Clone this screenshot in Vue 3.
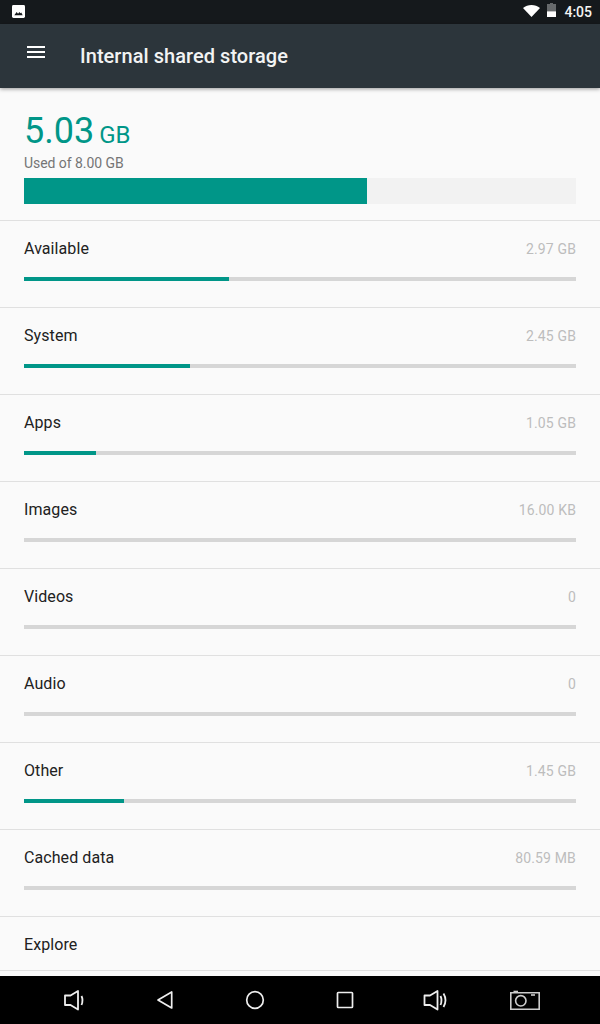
<template>
  <div class="screen">
    <div class="status-bar">
      <svg class="notif" width="13" height="13" viewBox="0 0 14 14">
        <rect x="0" y="0" width="14" height="14" rx="1.5" fill="#fff" />
        <path d="M2.5 11 L5 7.5 L6.5 9.5 L8 7.5 L9 9 L10 8 L11.5 11 Z" fill="#15191c" />
      </svg>
      <div class="status-right">
        <svg class="wifi" width="17" height="12" viewBox="0 0 18 14" preserveAspectRatio="none"><path d="M0 3.5 C5 -1 13 -1 18 3.5 L9 14 Z" fill="#fff" /></svg>
        <svg class="battery" width="9" height="14" viewBox="0 0 9 15" preserveAspectRatio="none">
          <path d="M3 0 H6 V1 H9 V15 H0 V1 H3 Z" fill="#fff" fill-opacity="0.35" />
          <rect x="0" y="9" width="9" height="6" fill="#fff" />
        </svg>
        <span class="clock">4:05</span>
      </div>
    </div>

    <header class="toolbar">
      <div class="menu-icon"><span></span><span></span><span></span></div>
      <h1>Internal shared storage</h1>
    </header>

    <main class="content">
      <section class="summary">
        <div class="total"><span class="big">5.03</span> <span class="unit">GB</span></div>
        <div class="used">Used of 8.00 GB</div>
        <div class="main-bar"><div class="main-fill"></div></div>
      </section>

      <div v-for="item in items" :key="item.name" class="row">
        <div class="row-head">
          <span class="name">{{ item.name }}</span>
          <span class="size">{{ item.size }}</span>
        </div>
        <div class="track"><div class="fill" :style="{ width: item.pct + '%' }"></div></div>
      </div>

      <div class="explore">Explore</div>
    </main>

    <nav class="nav-bar">
      <div class="nav-slot">
        <svg width="24" height="24" viewBox="0 0 24 24" fill="none" stroke="#eee" stroke-width="1.8">
          <path d="M2 7.5 H7.5 L15 3 V21.5 L7.5 17 H2 Z" stroke-linejoin="round" />
          <path d="M18.5 8 Q20.5 12.2 18.5 17" />
        </svg>
      </div>
      <div class="nav-slot">
        <svg width="24" height="24" viewBox="0 0 24 24" fill="none" stroke="#eee" stroke-width="1.7" stroke-linejoin="round">
          <path d="M18.7 4 V20 L5 12 Z" />
        </svg>
      </div>
      <div class="nav-slot">
        <svg width="24" height="24" viewBox="0 0 24 24" fill="none" stroke="#eee" stroke-width="1.7">
          <circle cx="12" cy="12" r="8.3" />
        </svg>
      </div>
      <div class="nav-slot">
        <svg width="24" height="24" viewBox="0 0 24 24" fill="none" stroke="#eee" stroke-width="1.7" stroke-linejoin="round">
          <rect x="4.5" y="4.5" width="15" height="15" rx="0.8" />
        </svg>
      </div>
      <div class="nav-slot">
        <svg width="24" height="24" viewBox="0 0 24 24" fill="none" stroke="#eee" stroke-width="1.8">
          <path d="M1.5 7.5 H7 L14.5 3 V21.5 L7 17 H1.5 Z" stroke-linejoin="round" />
          <path d="M17.5 8 Q19.5 12.2 17.5 17" />
          <path d="M20.5 5.5 Q24.5 12.2 20.5 19" />
        </svg>
      </div>
      <div class="nav-slot">
        <svg width="32" height="24" viewBox="0 0 32 24" fill="none" stroke="#ccc" stroke-width="1.6">
          <path d="M1.8 4.8 H30.2 V21.2 H1.8 Z" />
          <circle cx="11.8" cy="12.8" r="5.2" />
          <path d="M4.5 3.5 H9" />
          <path d="M22 7 H26" />
        </svg>
      </div>
    </nav>
  </div>
</template>

<script setup>
const items = [
  { name: 'Available', size: '2.97 GB', pct: 37.1 },
  { name: 'System', size: '2.45 GB', pct: 30.1 },
  { name: 'Apps', size: '1.05 GB', pct: 13 },
  { name: 'Images', size: '16.00 KB', pct: 0 },
  { name: 'Videos', size: '0', pct: 0 },
  { name: 'Audio', size: '0', pct: 0 },
  { name: 'Other', size: '1.45 GB', pct: 18.1 },
  { name: 'Cached data', size: '80.59 MB', pct: 0 }
]
</script>

<style scoped>
.screen { width: 600px; height: 1024px; display: flex; flex-direction: column; overflow: hidden; background: #fafafa; font-family: Roboto, "Liberation Sans", sans-serif; }

.status-bar { height: 24px; flex: none; display: flex; align-items: center; justify-content: space-between; padding: 0 8px 0 12px; background: #15191c; }
.notif { margin-bottom: 1px; }
.status-right { display: flex; align-items: center; gap: 8px; }
.wifi { margin: 0 -1px 2px 0; }
.battery { margin-bottom: 4px; }
.clock { color: #f4f4f4; font-size: 14px; font-weight: 500; }

.toolbar { height: 64px; flex: none; display: flex; align-items: center; background: #2c353b; box-shadow: 0 1px 4px rgba(0, 0, 0, 0.4); position: relative; }
.menu-icon { width: 18px; margin: 0 35px 8px 27px; display: flex; flex-direction: column; gap: 3px; }
.menu-icon span { height: 2px; background: #fff; }
.toolbar h1 { margin: 0; font-size: 20px; font-weight: 500; letter-spacing: 0.05px; color: #f2f3f3; }

.content { flex: 1; min-height: 0; }

.summary { height: 132px; box-sizing: border-box; padding: 20px 24px 0; }
.total { height: 46px; line-height: 46px; color: #009688; white-space: nowrap; }
.big { font-size: 36px; }
.unit { font-size: 24px; margin-left: 1px; }
.used { height: 24px; margin-top: -3px; line-height: 24px; font-size: 14px; letter-spacing: -0.05px; color: #757575; }
.main-bar { height: 26px; background: #f2f2f2; margin-top: 3px; }
.main-fill { width: 62.1%; height: 100%; background: #009688; }

.row { height: 87px; box-sizing: border-box; border-top: 1px solid #e0e0e0; padding: 0 24px; }
.row-head { height: 56px; display: flex; align-items: center; justify-content: space-between; }
.name { margin-bottom: 2px; font-size: 16px; letter-spacing: 0.08px; color: #212121; }
.size { font-size: 14px; letter-spacing: 0.15px; color: #bdbdbd; }
.track { height: 4px; background: #d6d6d6; }
.fill { height: 100%; background: #009688; }

.explore { height: 55px; box-sizing: border-box; border-top: 1px solid #e0e0e0; border-bottom: 1px solid #e0e0e0; padding-left: 24px; line-height: 56px; font-size: 16px; letter-spacing: 0.08px; color: #212121; }

.nav-bar { height: 48px; flex: none; display: flex; padding: 0 30px; background: #000; }
.nav-slot { width: 90px; display: flex; align-items: center; justify-content: center; }
</style>
